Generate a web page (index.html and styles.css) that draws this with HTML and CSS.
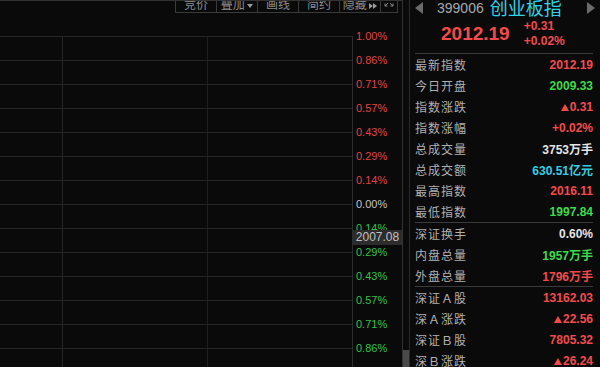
FILE: index.html
```html
<!DOCTYPE html>
<html lang="zh-CN">
<head>
    <meta charset="UTF-8">
    <title>创业板指 分时</title>
    <link rel="stylesheet" href="styles.css">
</head>
<body>

<div class="chart">
    <div class="toolbar">
        <span class="tb">竞价</span>
        <span class="tb">叠加 <i class="tri-down"></i></span>
        <span class="tb">画线</span>
        <span class="tb">简约</span>
        <span class="tb">隐藏 <i class="tri-r"></i><i class="tri-r"></i></span>
        <span class="tb tb-icon">
            <svg width="10" height="10" viewBox="0 0 10 10"><path d="M1 9 L4 6 M1 9 L1 6.5 M1 9 L3.5 9 M9 9 L6 6 M9 9 L9 6.5 M9 9 L6.5 9" stroke="#8a8a8a" stroke-width="1" fill="none"/></svg>
        </span>
    </div>

    <div class="plot">
        <div class="row"><div class="ln"></div><span class="pct up">1.00%</span></div>
        <div class="row"><div class="ln"></div><span class="pct up">0.86%</span></div>
        <div class="row"><div class="ln"></div><span class="pct up">0.71%</span></div>
        <div class="row"><div class="ln"></div><span class="pct up">0.57%</span></div>
        <div class="row"><div class="ln"></div><span class="pct up">0.43%</span></div>
        <div class="row"><div class="ln"></div><span class="pct up">0.29%</span></div>
        <div class="row"><div class="ln"></div><span class="pct up">0.14%</span></div>
        <div class="row"><div class="ln"></div><span class="pct zero">0.00%</span></div>
        <div class="row"><div class="ln"></div><span class="pct down">0.14%</span></div>
        <div class="row"><div class="ln"></div><span class="pct down">0.29%</span></div>
        <div class="row"><div class="ln"></div><span class="pct down">0.43%</span></div>
        <div class="row"><div class="ln"></div><span class="pct down">0.57%</span></div>
        <div class="row"><div class="ln"></div><span class="pct down">0.71%</span></div>
        <div class="row"><div class="ln"></div><span class="pct down">0.86%</span></div>
    </div>

    <!-- 十字光标价格 -->
    <div class="price-tag">2007.08</div>
</div>

<div class="scroll"><div class="thumb"></div></div>

<div class="panel">
    <div class="head">
        <div class="head-top">
            <i class="arrow-l"></i>
            <span class="code">399006</span>
            <span class="name">创业板指</span>
            <i class="arrow-r"></i>
        </div>
        <div class="head-price">
            <span class="big red">2012.19</span>
            <div class="chg red">
                <span>+0.31</span>
                <span>+0.02%</span>
            </div>
        </div>
    </div>

    <div class="group">
        <div class="item"><span class="lbl">最新指数</span><span class="val red">2012.19</span></div>
        <div class="item"><span class="lbl">今日开盘</span><span class="val green">2009.33</span></div>
        <div class="item"><span class="lbl">指数涨跌</span><span class="val red"><i class="tri-up"></i>0.31</span></div>
        <div class="item"><span class="lbl">指数涨幅</span><span class="val red">+0.02%</span></div>
        <div class="item"><span class="lbl">总成交量</span><span class="val white">3753万手</span></div>
        <div class="item"><span class="lbl">总成交额</span><span class="val cyan">630.51亿元</span></div>
        <div class="item"><span class="lbl">最高指数</span><span class="val red">2016.11</span></div>
        <div class="item"><span class="lbl">最低指数</span><span class="val green">1997.84</span></div>
    </div>
    <div class="group">
        <div class="item"><span class="lbl">深证换手</span><span class="val white">0.60%</span></div>
        <div class="item"><span class="lbl">内盘总量</span><span class="val green">1957万手</span></div>
        <div class="item"><span class="lbl">外盘总量</span><span class="val red">1796万手</span></div>
    </div>
    <div class="group">
        <div class="item"><span class="lbl">深证Ａ股</span><span class="val red">13162.03</span></div>
        <div class="item"><span class="lbl">深Ａ涨跌</span><span class="val red"><i class="tri-up"></i>22.56</span></div>
        <div class="item"><span class="lbl">深证Ｂ股</span><span class="val red">7805.32</span></div>
        <div class="item"><span class="lbl">深Ｂ涨跌</span><span class="val red"><i class="tri-up"></i>26.24</span></div>
    </div>
</div>

</body>
</html>
```

FILE: styles.css
```css
body {
    margin: 0;
    width: 600px;
    height: 367px;
    overflow: hidden;
    display: flex;
    background-color: #0a0a0a;
    font-family: "Liberation Sans", "Noto Sans CJK SC", sans-serif;
}
/* 分时图区域 */
.chart {
    width: 402px;
    display: flex;
    flex-direction: column;
    border-top: 1px solid #333;
    position: relative;
}
.toolbar {
    height: 12px;
    display: flex;
    align-items: flex-end;
    overflow: hidden;
    padding-left: 175px;
}
.tb {
    flex-shrink: 0;
    width: 41px;
    height: 16px;
    box-sizing: border-box;
    border: 1px solid #3a3a3a;
    border-top: none;
    border-right: none;
    color: #8c8c8c;
    font-family: "Noto Sans CJK SC", sans-serif;
    font-size: 12px;
    line-height: 14px;
    text-align: center;
}
.tb-icon {
    width: 18px;
    border-right: 1px solid #3a3a3a;
    line-height: 10px;
}
.tri-down {
    display: inline-block;
    border-left: 3px solid transparent;
    border-right: 3px solid transparent;
    border-top: 4px solid #9a9a9a;
    vertical-align: middle;
}
.tri-r {
    display: inline-block;
    border-top: 3px solid transparent;
    border-bottom: 3px solid transparent;
    border-left: 4px solid #9a9a9a;
    vertical-align: middle;
}
.plot {
    flex: 1;
    margin-top: 11px;
    background:
        linear-gradient(#262626, #262626) 62px 12px / 1px 100% no-repeat,
        linear-gradient(#1e1e1e, #1e1e1e) 207px 12px / 1px 100% no-repeat,
        linear-gradient(#2e2e2e, #2e2e2e) 352px 12px / 1px 100% no-repeat;
}
.row {
    display: grid;
    grid-template-columns: 352px 1fr;
    align-items: center;
    height: 24px;
}
.ln {
    height: 1px;
    background-color: #262626;
}
.pct {
    padding-left: 4px;
    font-size: 11px;
}
.pct.up { color: #e04444; }
.pct.zero { color: #c4c4c4; }
.pct.down { color: #2fc24a; }
.price-tag {
    position: absolute;
    left: 353px;
    top: 229px;
    width: 49px;
    height: 15px;
    background-color: #2c2c2c;
    color: #c0c0c0;
    font-size: 12px;
    line-height: 15px;
    text-align: center;
}
.scroll {
    width: 6px;
    display: flex;
    flex-direction: column;
    border-left: 1px solid #333;
    border-right: 1px solid #2a2a2a;
}
.thumb {
    margin-top: auto;
    height: 17px;
    background-color: #4a4a4a;
}
/* 右侧行情面板 */
.panel {
    flex: 1;
    padding: 0 7px 0 5px;
}
.head {
    height: 53px;
    border-bottom: 1px solid #3a3a3a;
}
.head-top {
    display: flex;
    align-items: center;
    height: 15px;
}
.arrow-l {
    border-top: 6px solid transparent;
    border-bottom: 6px solid transparent;
    border-right: 8px solid #6a6a6a;
}
.arrow-r {
    margin-left: auto;
    margin-right: -2px;
    border-top: 6px solid transparent;
    border-bottom: 6px solid transparent;
    border-left: 8px solid #6a6a6a;
}
.code {
    margin-left: 14px;
    color: #a8a8a8;
    font-size: 14px;
}
.name {
    margin-left: 6px;
    color: #2fd3e6;
    font-family: "Noto Sans CJK SC", sans-serif;
    font-size: 18px;
    line-height: 15px;
}
.head-price {
    display: flex;
    align-items: center;
    height: 38px;
    padding-left: 26px;
}
.big {
    font-size: 19px;
    font-weight: bold;
}
.chg {
    display: flex;
    flex-direction: column;
    margin-left: 14px;
    font-size: 12px;
    font-weight: bold;
    line-height: 15px;
}
.group {
    border-bottom: 1px solid #3a3a3a;
}
.item {
    display: flex;
    justify-content: space-between;
    align-items: center;
    height: 21px;
}
.lbl {
    color: #b0b0b0;
    font-family: "Noto Sans CJK SC", sans-serif;
    font-size: 12px;
    letter-spacing: 1px;
}
.val {
    font-size: 12px;
    font-weight: bold;
}
.tri-up {
    display: inline-block;
    margin-right: 1px;
    border-left: 4px solid transparent;
    border-right: 4px solid transparent;
    border-bottom: 7px solid currentColor;
}
.red { color: #f44a4a; }
.green { color: #3ddc48; }
.cyan { color: #30d0e4; }
.white { color: #e4e4e4; }
```
